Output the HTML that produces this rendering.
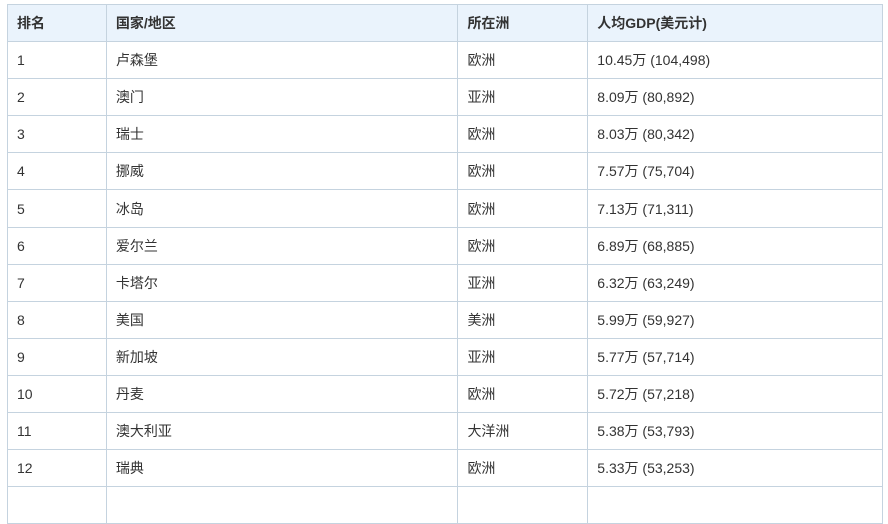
<!DOCTYPE html><html><head><meta charset="utf-8"><style>
body{margin:0;background:#fff;font-family:"Liberation Sans","Noto Sans CJK SC",sans-serif;overflow:hidden;height:489px}
table{position:absolute;left:7px;top:4px;border-collapse:collapse;width:876px;font-size:14px;color:#333;}
td,th{border:1px solid #c5d3df;padding:0 9px;text-align:left;height:36px;}
th{background:#eaf3fc;font-weight:bold;color:#333;height:36px;}
tr{height:37.1px}
</style></head><body>
<table>
<colgroup><col style="width:99px"><col style="width:352px"><col style="width:130px"><col style="width:295px"></colgroup>
<tr><th>排名</th><th>国家/地区</th><th>所在洲</th><th>人均GDP(美元计)</th></tr>
<tr><td>1</td><td>卢森堡</td><td>欧洲</td><td>10.45万 (104,498)</td></tr>
<tr><td>2</td><td>澳门</td><td>亚洲</td><td>8.09万 (80,892)</td></tr>
<tr><td>3</td><td>瑞士</td><td>欧洲</td><td>8.03万 (80,342)</td></tr>
<tr><td>4</td><td>挪威</td><td>欧洲</td><td>7.57万 (75,704)</td></tr>
<tr><td>5</td><td>冰岛</td><td>欧洲</td><td>7.13万 (71,311)</td></tr>
<tr><td>6</td><td>爱尔兰</td><td>欧洲</td><td>6.89万 (68,885)</td></tr>
<tr><td>7</td><td>卡塔尔</td><td>亚洲</td><td>6.32万 (63,249)</td></tr>
<tr><td>8</td><td>美国</td><td>美洲</td><td>5.99万 (59,927)</td></tr>
<tr><td>9</td><td>新加坡</td><td>亚洲</td><td>5.77万 (57,714)</td></tr>
<tr><td>10</td><td>丹麦</td><td>欧洲</td><td>5.72万 (57,218)</td></tr>
<tr><td>11</td><td>澳大利亚</td><td>大洋洲</td><td>5.38万 (53,793)</td></tr>
<tr><td>12</td><td>瑞典</td><td>欧洲</td><td>5.33万 (53,253)</td></tr>
<tr><td>&nbsp;</td><td></td><td></td><td></td></tr>
</table>
</body></html>
